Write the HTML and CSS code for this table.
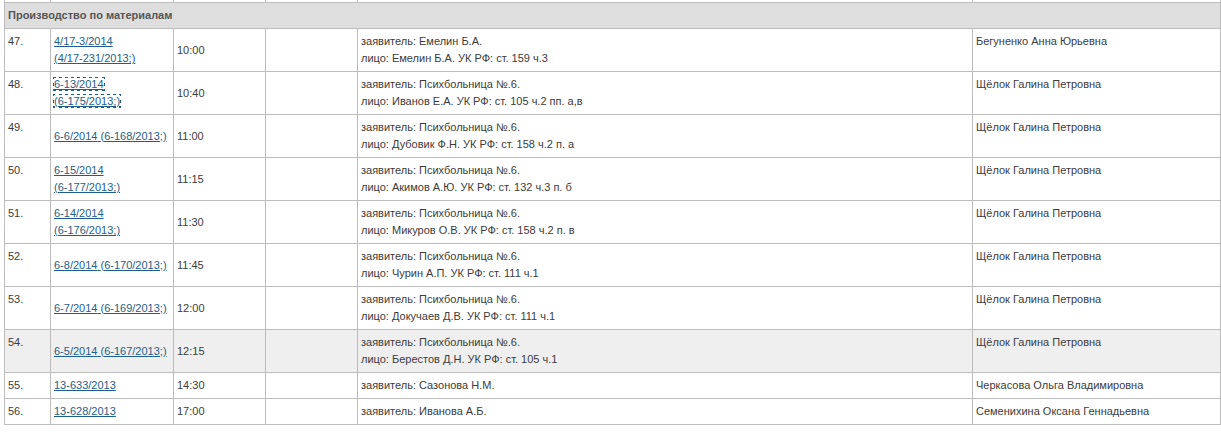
FILE: index.html
```html
<!DOCTYPE html>
<html lang="ru">
<head>
    <meta charset="UTF-8">
    <meta name="viewport" content="width=device-width, initial-scale=1.0">
    <title>Список дел</title>
    <link rel="stylesheet" href="styles.css">
</head>
<body>
    <table class="cases">
        <colgroup>
            <col class="col-num">
            <col class="col-case">
            <col class="col-time">
            <col class="col-room">
            <col class="col-info">
            <col class="col-judge">
        </colgroup>
        <tr class="prev-row">
            <td></td><td></td><td></td><td></td><td></td><td></td>
        </tr>
        <tr class="group">
            <td colspan="6">Производство по материалам</td>
        </tr>
        <tr>
            <td class="num">47.</td>
            <td class="case"><a href="#"><span>4/17-3/2014</span> <span>(4/17-231/2013;)</span></a></td>
            <td class="time">10:00</td>
            <td class="room"></td>
            <td class="info">заявитель: Емелин Б.А.<br>лицо: Емелин Б.А. УК РФ: ст. 159 ч.3</td>
            <td class="judge">Бегуненко Анна Юрьевна</td>
        </tr>
        <tr>
            <td class="num">48.</td>
            <td class="case"><a href="#" class="focused"><span>6-13/2014</span> <span>(6-175/2013;)</span></a></td>
            <td class="time">10:40</td>
            <td class="room"></td>
            <td class="info">заявитель: Психбольница №.6.<br>лицо: Иванов Е.А. УК РФ: ст. 105 ч.2 пп. а,в</td>
            <td class="judge">Щёлок Галина Петровна</td>
        </tr>
        <tr>
            <td class="num">49.</td>
            <td class="case"><a href="#"><span>6-6/2014</span> <span>(6-168/2013;)</span></a></td>
            <td class="time">11:00</td>
            <td class="room"></td>
            <td class="info">заявитель: Психбольница №.6.<br>лицо: Дубовик Ф.Н. УК РФ: ст. 158 ч.2 п. а</td>
            <td class="judge">Щёлок Галина Петровна</td>
        </tr>
        <tr>
            <td class="num">50.</td>
            <td class="case"><a href="#"><span>6-15/2014</span> <span>(6-177/2013;)</span></a></td>
            <td class="time">11:15</td>
            <td class="room"></td>
            <td class="info">заявитель: Психбольница №.6.<br>лицо: Акимов А.Ю. УК РФ: ст. 132 ч.3 п. б</td>
            <td class="judge">Щёлок Галина Петровна</td>
        </tr>
        <tr>
            <td class="num">51.</td>
            <td class="case"><a href="#"><span>6-14/2014</span> <span>(6-176/2013;)</span></a></td>
            <td class="time">11:30</td>
            <td class="room"></td>
            <td class="info">заявитель: Психбольница №.6.<br>лицо: Микуров О.В. УК РФ: ст. 158 ч.2 п. в</td>
            <td class="judge">Щёлок Галина Петровна</td>
        </tr>
        <tr>
            <td class="num">52.</td>
            <td class="case"><a href="#"><span>6-8/2014</span> <span>(6-170/2013;)</span></a></td>
            <td class="time">11:45</td>
            <td class="room"></td>
            <td class="info">заявитель: Психбольница №.6.<br>лицо: Чурин А.П. УК РФ: ст. 111 ч.1</td>
            <td class="judge">Щёлок Галина Петровна</td>
        </tr>
        <tr>
            <td class="num">53.</td>
            <td class="case"><a href="#"><span>6-7/2014</span> <span>(6-169/2013;)</span></a></td>
            <td class="time">12:00</td>
            <td class="room"></td>
            <td class="info">заявитель: Психбольница №.6.<br>лицо: Докучаев Д.В. УК РФ: ст. 111 ч.1</td>
            <td class="judge">Щёлок Галина Петровна</td>
        </tr>
        <tr class="hover">
            <td class="num">54.</td>
            <td class="case"><a href="#"><span>6-5/2014</span> <span>(6-167/2013;)</span></a></td>
            <td class="time">12:15</td>
            <td class="room"></td>
            <td class="info">заявитель: Психбольница №.6.<br>лицо: Берестов Д.Н. УК РФ: ст. 105 ч.1</td>
            <td class="judge">Щёлок Галина Петровна</td>
        </tr>
        <tr>
            <td class="num">55.</td>
            <td class="case"><a href="#">13-633/2013</a></td>
            <td class="time">14:30</td>
            <td class="room"></td>
            <td class="info">заявитель: Сазонова Н.М.</td>
            <td class="judge">Черкасова Ольга Владимировна</td>
        </tr>
        <tr>
            <td class="num">56.</td>
            <td class="case"><a href="#">13-628/2013</a></td>
            <td class="time">17:00</td>
            <td class="room"></td>
            <td class="info">заявитель: Иванова А.Б.</td>
            <td class="judge">Семенихина Оксана Геннадьевна</td>
        </tr>
    </table>
</body>
</html>
```

FILE: styles.css
```css
body {
    margin: 0;
    font-family: "Liberation Sans", Arial, sans-serif;
    font-size: 11px;
    color: #3c3c3c;
    background: #fff;
}
.cases {
    margin-left: 4px;
    width: 1216px;
    table-layout: fixed;
    border-collapse: collapse;
}
.col-num { width: 46px; }
.col-case { width: 123px; }
.col-time { width: 92px; }
.col-room { width: 92px; }
.col-info { width: 615px; }
.col-judge { width: 248px; }
.cases td {
    border: 1px solid #bdbdbd;
    padding: 4px 3px;
    line-height: 17px;
    vertical-align: middle;
}
.cases .prev-row td {
    border-top: none;
    padding: 0;
    height: 2px;
    line-height: 0;
}
.cases .group td {
    background: #dedede;
    font-weight: bold;
    color: #555;
}
.cases td.num,
.cases td.judge {
    vertical-align: top;
}
.cases tr.hover td {
    background: #efefef;
}
.cases a {
    color: #1d5f8a;
    text-decoration: underline;
}
.cases a span {
    white-space: nowrap;
}
.cases a.focused {
    outline: 1px dotted #1d5f8a;
}
```
